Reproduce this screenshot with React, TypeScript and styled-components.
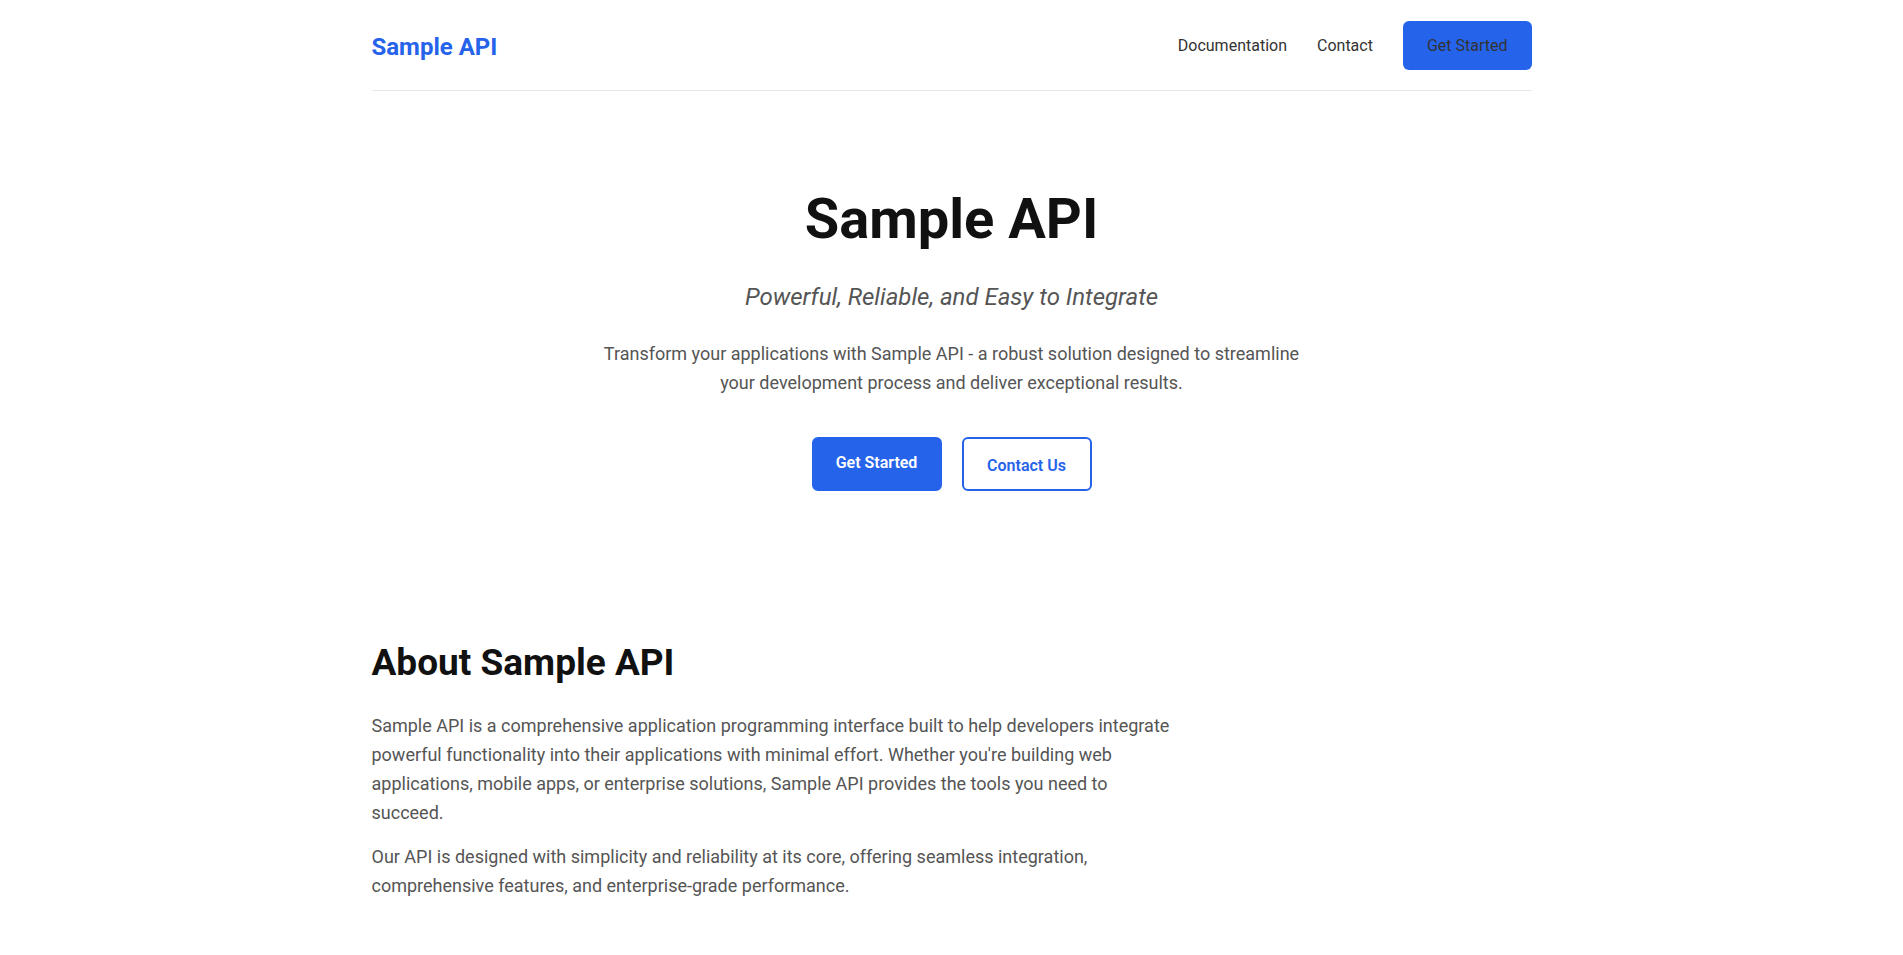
import React from "react";
import styled, { createGlobalStyle } from "styled-components";

const Global = createGlobalStyle`
  * { box-sizing: border-box; }
  html, body { margin: 0; padding: 0; background: #ffffff; }
  body {
    font-family: "Segoe UI", Roboto, "Noto Sans", sans-serif;
    color: #333;
  }
`;

const Container = styled.div`
  max-width: 1200px;
  margin: 0 auto;
  padding: 0 20px;
`;

const Header = styled.header`
  display: flex;
  align-items: center;
  justify-content: space-between;
  padding: 21px 0 20px;
  border-bottom: 1px solid #e5e7eb;
`;

const Logo = styled.a`
  font-size: 24px;
  font-weight: 700;
  color: #2563eb;
  text-decoration: none;
  padding-top: 3px;
`;

const Nav = styled.nav`
  display: flex;
  align-items: center;
  gap: 30px;
`;

const NavLink = styled.a`
  font-size: 16px;
  color: #333;
  text-decoration: none;
`;

const NavButton = styled.a`
  display: inline-flex;
  align-items: center;
  justify-content: center;
  height: 49px;
  padding: 0 24px;
  background: #2563eb;
  color: #333;
  border-radius: 6px;
  font-size: 16px;
  text-decoration: none;
`;

const Hero = styled.section`
  text-align: center;
  padding: 95px 0 0;
`;

const Title = styled.h1`
  margin: 0;
  font-size: 56px;
  line-height: 1.2;
  font-weight: 700;
  color: #111;
`;

const Subtitle = styled.p`
  margin: 30px 0 0;
  font-size: 24px;
  font-style: italic;
  color: #555;
`;

const Lead = styled.p`
  margin: 29px auto 0;
  max-width: 700px;
  font-size: 18px;
  line-height: 1.6;
  color: #555;
`;

const Actions = styled.div`
  display: flex;
  justify-content: center;
  gap: 20px;
  margin-top: 39px;
`;

const Button = styled.a<{ $variant?: "primary" | "outline" }>`
  display: inline-flex;
  align-items: center;
  justify-content: center;
  width: 130px;
  height: 54px;
  border-radius: 6px;
  font-size: 16px;
  font-weight: 600;
  text-decoration: none;
  background: ${(p) => (p.$variant === "outline" ? "#fff" : "#2563eb")};
  color: ${(p) => (p.$variant === "outline" ? "#2563eb" : "#fff")};
  border: 2px solid #2563eb;
  padding-top: ${(p) => (p.$variant === "outline" ? "3px" : "0")};
  padding-bottom: ${(p) => (p.$variant === "outline" ? "0" : "3px")};
`;

const About = styled.section`
  padding: 150px 0 60px;
`;

const AboutTitle = styled.h2`
  margin: 0;
  font-size: 37px;
  line-height: 1.2;
  font-weight: 700;
  color: #111;
`;

const Body = styled.div`
  max-width: 800px;
  margin-top: 27px;
`;

const Para = styled.p`
  margin: 0 0 16px;
  font-size: 18px;
  line-height: 1.6;
  color: #555;
`;

export default function App() {
  return (
    <>
      <Global />
      <Container>
        <Header>
          <Logo href="#">Sample API</Logo>
          <Nav>
            <NavLink href="#">Documentation</NavLink>
            <NavLink href="#">Contact</NavLink>
            <NavButton href="#">Get Started</NavButton>
          </Nav>
        </Header>
        <Hero>
          <Title>Sample API</Title>
          <Subtitle>Powerful, Reliable, and Easy to Integrate</Subtitle>
          <Lead>
            Transform your applications with Sample API - a robust solution designed to streamline
            your development process and deliver exceptional results.
          </Lead>
          <Actions>
            <Button href="#">Get Started</Button>
            <Button href="#" $variant="outline">Contact Us</Button>
          </Actions>
        </Hero>
        <About>
          <AboutTitle>About Sample API</AboutTitle>
          <Body>
            <Para>
              Sample API is a comprehensive application programming interface built to help developers
              integrate powerful functionality into their applications with minimal effort. Whether you're
              building web applications, mobile apps, or enterprise solutions, Sample API provides the tools
              you need to succeed.
            </Para>
            <Para>
              Our API is designed with simplicity and reliability at its core, offering seamless integration,
              comprehensive features, and enterprise-grade performance.
            </Para>
          </Body>
        </About>
      </Container>
    </>
  );
}
